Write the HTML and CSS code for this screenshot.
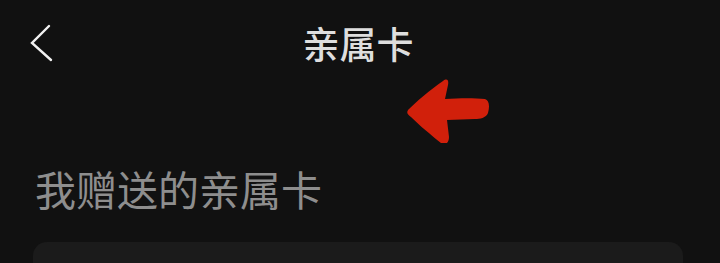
FILE: index.html
```html
<!DOCTYPE html>
<html lang="zh">
<head>
<meta charset="utf-8">
<link rel="stylesheet" href="styles.css">
</head>
<body>
<div class="page">
  <header class="nav">
    <span class="back">
      <svg width="24" height="38" viewBox="0 0 24 38"><path d="M19 2 L2 19 L21 36" fill="none" stroke="#f2f2f2" stroke-width="2.4" stroke-linecap="round" stroke-linejoin="miter"/></svg>
    </span>
    <h1 class="title">亲属卡</h1>
  </header>
  <svg class="mark" width="90" height="70" viewBox="0 0 90 70"><path d="M4 36 C10 30 26 16 38 8 C42 5 44 7 43 12 L40 26 C55 25 70 25 80 26 C84 27 85 33 83 40 C81 45 75 46 70 46 L42 47 L44 64 C44 70 40 73 36 70 C26 62 14 52 6 44 C2 41 1 39 4 36 Z" fill="#d1200b"/></svg>
  <h2 class="subtitle">我赠送的亲属卡</h2>
  <div class="card"></div>
</div>
</body>
</html>
```

FILE: styles.css
```css
html, body {
  margin: 0;
  padding: 0;
  background: #111111;
  height: 100%;
  overflow: hidden;
}
.page {
  position: relative;
  font-family: "Noto Sans CJK SC", "Noto Sans", sans-serif;
}
.nav {
  position: relative;
  height: 86px;
  display: flex;
  align-items: center;
  justify-content: center;
}
.back {
  position: absolute;
  left: 30px;
  top: 24px;
  display: flex;
}
.title {
  margin: 0 4px 0 0;
  font-size: 37px;
  font-weight: 500;
  color: #dedede;
  line-height: 86px;
}
.mark {
  position: absolute;
  left: 405px;
  top: 73px;
}
.subtitle {
  margin: 78px 0 0 35px;
  font-size: 41px;
  font-weight: 400;
  color: #8e8e8e;
  line-height: 48px;
  height: 48px;
}
.card {
  margin: 30px 37px 0 33px;
  height: 120px;
  background: #1b1b1b;
  border-radius: 14px;
}
```
